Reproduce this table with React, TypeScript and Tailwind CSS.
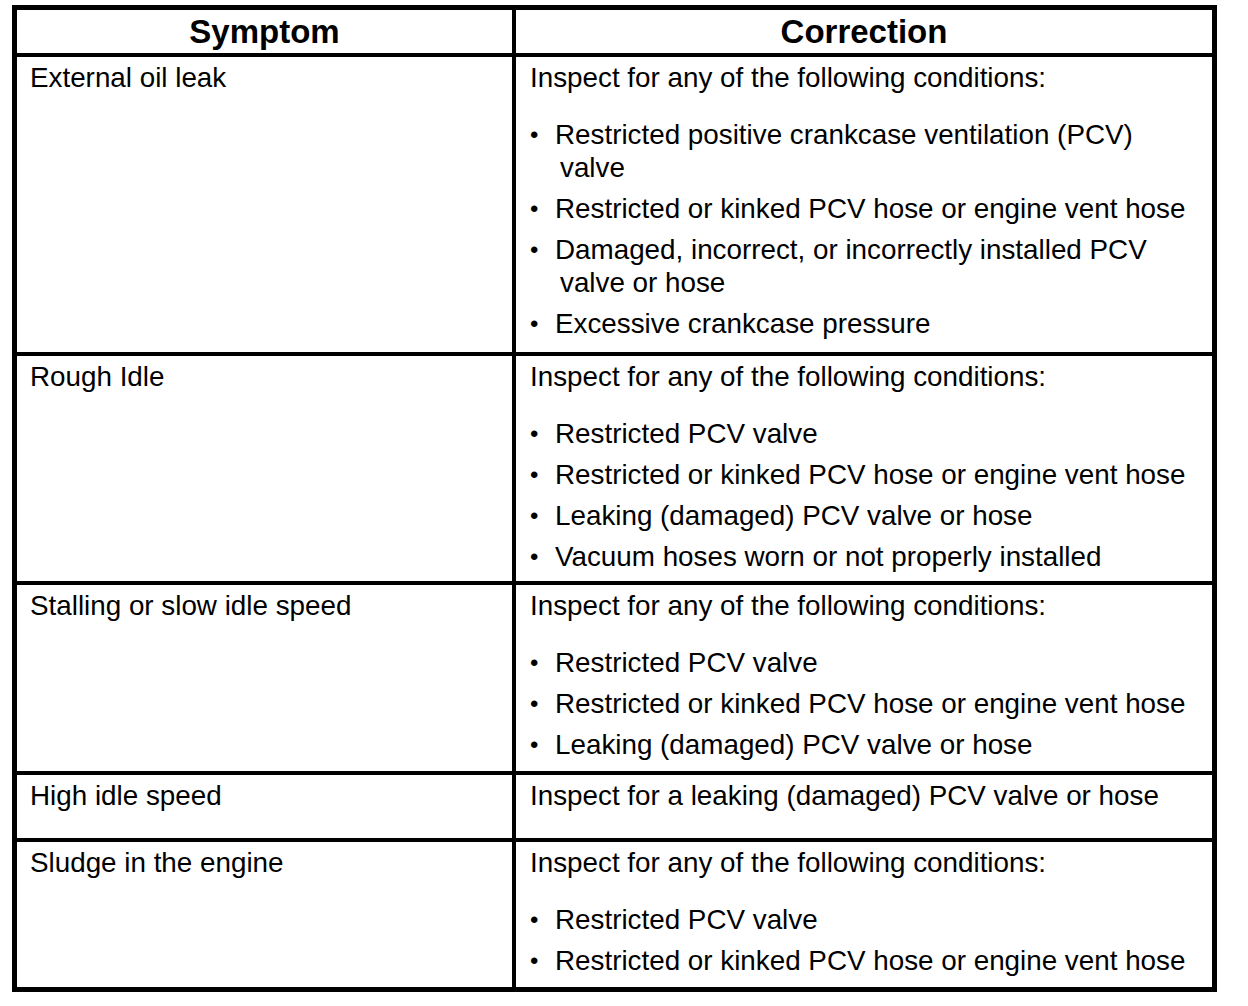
const rows = [
  {
    symptom: 'External oil leak',
    intro: 'Inspect for any of the following conditions:',
    items: [
      ['Restricted positive crankcase ventilation (PCV)', 'valve'],
      ['Restricted or kinked PCV hose or engine vent hose'],
      ['Damaged, incorrect, or incorrectly installed PCV', 'valve or hose'],
      ['Excessive crankcase pressure']
    ],
    height: 'h-[295px]'
  },
  {
    symptom: 'Rough Idle',
    intro: 'Inspect for any of the following conditions:',
    items: [
      ['Restricted PCV valve'],
      ['Restricted or kinked PCV hose or engine vent hose'],
      ['Leaking (damaged) PCV valve or hose'],
      ['Vacuum hoses worn or not properly installed']
    ],
    height: 'h-[225px]'
  },
  {
    symptom: 'Stalling or slow idle speed',
    intro: 'Inspect for any of the following conditions:',
    items: [
      ['Restricted PCV valve'],
      ['Restricted or kinked PCV hose or engine vent hose'],
      ['Leaking (damaged) PCV valve or hose']
    ],
    height: 'h-[186px]'
  },
  {
    symptom: 'High idle speed',
    intro: 'Inspect for a leaking (damaged) PCV valve or hose',
    items: [],
    height: 'h-[63px]'
  },
  {
    symptom: 'Sludge in the engine',
    intro: 'Inspect for any of the following conditions:',
    items: [['Restricted PCV valve'], ['Restricted or kinked PCV hose or engine vent hose']],
    height: 'h-[145px]'
  }
];

export default function App() {
  return (
    <div className="min-h-screen bg-white pl-[12px] pt-[5px] font-['Liberation_Sans',Arial,sans-serif] text-black">
      <div className="w-[1205px] border-[5px] border-black">
        <div className="flex h-[47px] border-b-4 border-black text-[33px] leading-[43px] font-bold">
          <div className="w-[495px] text-center">Symptom</div>
          <div className="flex-1 border-l-4 border-black text-center">Correction</div>
        </div>

        {rows.map((row, i) => (
          <div
            key={row.symptom}
            className={`flex text-[27.8px] leading-[33px] ${row.height} ${
              i < rows.length - 1 ? 'box-content border-b-4 border-black' : ''
            }`}
          >
            <div className="w-[495px] pt-[4px] pl-[13px]">{row.symptom}</div>
            <div className="flex-1 border-l-4 border-black pt-[4px] pl-[14px]">
              <p className="mb-[24px]">{row.intro}</p>
              <ul className="flex flex-col gap-[8px]">
                {row.items.map(lines => (
                  <li key={lines[0]} className="flex">
                    <span className="w-[25px] text-[24px]">•</span>
                    <span className="pl-[5px] [text-indent:-5px]">
                      {lines.map((line, j) => (
                        <span key={line}>
                          {j > 0 && <br />}
                          {line}
                        </span>
                      ))}
                    </span>
                  </li>
                ))}
              </ul>
            </div>
          </div>
        ))}
      </div>
    </div>
  );
}
